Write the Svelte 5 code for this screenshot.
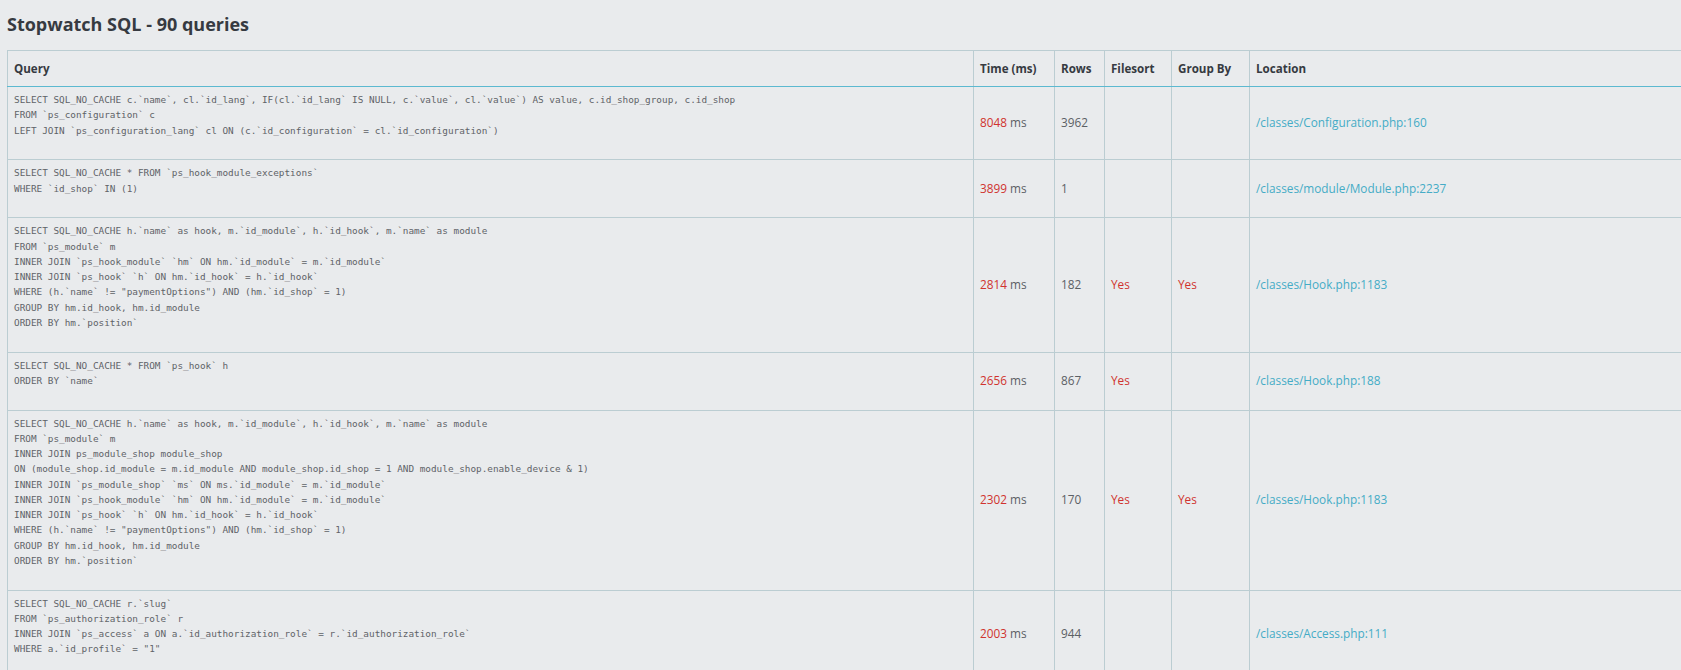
<script>
  const rows = [
    { sql: "SELECT SQL_NO_CACHE c.`name`, cl.`id_lang`, IF(cl.`id_lang` IS NULL, c.`value`, cl.`value`) AS value, c.id_shop_group, c.id_shop\nFROM `ps_configuration` c\nLEFT JOIN `ps_configuration_lang` cl ON (c.`id_configuration` = cl.`id_configuration`)", time: 8048, rows: 3962, fs: false, gb: false, loc: "/classes/Configuration.php:160" },
    { sql: "SELECT SQL_NO_CACHE * FROM `ps_hook_module_exceptions`\nWHERE `id_shop` IN (1)", time: 3899, rows: 1, fs: false, gb: false, loc: "/classes/module/Module.php:2237" },
    { sql: "SELECT SQL_NO_CACHE h.`name` as hook, m.`id_module`, h.`id_hook`, m.`name` as module\nFROM `ps_module` m\nINNER JOIN `ps_hook_module` `hm` ON hm.`id_module` = m.`id_module`\nINNER JOIN `ps_hook` `h` ON hm.`id_hook` = h.`id_hook`\nWHERE (h.`name` != \"paymentOptions\") AND (hm.`id_shop` = 1)\nGROUP BY hm.id_hook, hm.id_module\nORDER BY hm.`position`", time: 2814, rows: 182, fs: true, gb: true, loc: "/classes/Hook.php:1183" },
    { sql: "SELECT SQL_NO_CACHE * FROM `ps_hook` h\nORDER BY `name`", time: 2656, rows: 867, fs: true, gb: false, loc: "/classes/Hook.php:188" },
    { sql: "SELECT SQL_NO_CACHE h.`name` as hook, m.`id_module`, h.`id_hook`, m.`name` as module\nFROM `ps_module` m\nINNER JOIN ps_module_shop module_shop\nON (module_shop.id_module = m.id_module AND module_shop.id_shop = 1 AND module_shop.enable_device & 1)\nINNER JOIN `ps_module_shop` `ms` ON ms.`id_module` = m.`id_module`\nINNER JOIN `ps_hook_module` `hm` ON hm.`id_module` = m.`id_module`\nINNER JOIN `ps_hook` `h` ON hm.`id_hook` = h.`id_hook`\nWHERE (h.`name` != \"paymentOptions\") AND (hm.`id_shop` = 1)\nGROUP BY hm.id_hook, hm.id_module\nORDER BY hm.`position`", time: 2302, rows: 170, fs: true, gb: true, loc: "/classes/Hook.php:1183" },
    { sql: "SELECT SQL_NO_CACHE r.`slug`\nFROM `ps_authorization_role` r\nINNER JOIN `ps_access` a ON a.`id_authorization_role` = r.`id_authorization_role`\nWHERE a.`id_profile` = \"1\"", time: 2003, rows: 944, fs: false, gb: false, loc: "/classes/Access.php:111" }
  ];
</script>

<div class="page">
  <h2>Stopwatch SQL - 90 queries</h2>
  <table>
    <colgroup>
      <col class="c-query" /><col class="c-time" /><col class="c-rows" /><col class="c-fs" /><col class="c-gb" /><col class="c-loc" />
    </colgroup>
    <thead>
      <tr>
        <th>Query</th><th>Time (ms)</th><th>Rows</th><th>Filesort</th><th>Group By</th><th>Location</th>
      </tr>
    </thead>
    <tbody>
      {#each rows as r}
        <tr>
          <td class="q"><pre>{r.sql}</pre></td>
          <td><span class="red">{r.time}</span> ms</td>
          <td>{r.rows}</td>
          <td>{#if r.fs}<span class="red">Yes</span>{/if}</td>
          <td>{#if r.gb}<span class="red">Yes</span>{/if}</td>
          <td><a href="#top">{r.loc}</a></td>
        </tr>
      {/each}
    </tbody>
  </table>
</div>

<style>
  :global(body) {
    margin: 0;
    background: #e9ebed;
  }
  .page {
    height: 670px;
    overflow: hidden;
    padding-left: 7px;
    color: #363a41;
    font-family: "Open Sans", sans-serif;
    font-size: 12px;
  }
  h2 {
    margin: 0;
    padding: 12px 0 14px;
    font-size: 18px;
    line-height: 24px;
    font-weight: 700;
    color: #363a41;
  }
  table {
    table-layout: fixed;
    border-collapse: collapse;
    width: 1700px;
  }
  .c-query { width: 966px; }
  .c-time { width: 81px; }
  .c-rows { width: 50px; }
  .c-fs { width: 67px; }
  .c-gb { width: 78px; }
  th, td {
    border: 1px solid #bbcdd2;
    padding: 0 6px 2px;
    text-align: left;
    vertical-align: middle;
  }
  td {
    font-weight: 400;
    font-size: 11.8px;
    color: #5c6065;
  }
  th {
    height: 35px;
    padding-bottom: 0;
    font-weight: 700;
    font-size: 11.6px;
    border-bottom: 1px solid #5cb9d0;
  }
  td.q {
    padding: 5px 6px 0;
    vertical-align: top;
  }
  pre {
    margin: 0 0 21.5px;
    font-family: "DejaVu Sans Mono", monospace;
    font-size: 9.37px;
    line-height: 15.25px;
    color: #5f6368;
  }
  .red { color: #d0332f; }
  a {
    color: #45abc6;
    text-decoration: none;
  }
</style>
